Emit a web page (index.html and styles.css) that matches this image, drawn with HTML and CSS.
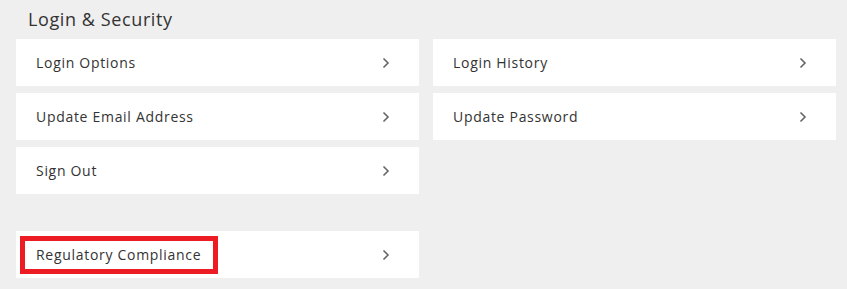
FILE: index.html
```html
<!DOCTYPE html>
<html lang="en">
<head>
    <meta charset="UTF-8">
    <meta name="viewport" content="width=device-width, initial-scale=1.0">
    <title>Login &amp; Security</title>
    <link rel="stylesheet" href="styles.css">
</head>
<body>
    <div class="settings">
        <h2 class="section-title">Login &amp; Security</h2>
        <div class="card-grid">
            <a class="card" href="#">
                <span class="card-label">Login Options</span>
                <svg class="chevron" viewBox="0 0 8 12"><path d="M1.5 1.5 L6 6 L1.5 10.5"/></svg>
            </a>
            <a class="card" href="#">
                <span class="card-label">Login History</span>
                <svg class="chevron" viewBox="0 0 8 12"><path d="M1.5 1.5 L6 6 L1.5 10.5"/></svg>
            </a>
            <a class="card" href="#">
                <span class="card-label">Update Email Address</span>
                <svg class="chevron" viewBox="0 0 8 12"><path d="M1.5 1.5 L6 6 L1.5 10.5"/></svg>
            </a>
            <a class="card" href="#">
                <span class="card-label">Update Password</span>
                <svg class="chevron" viewBox="0 0 8 12"><path d="M1.5 1.5 L6 6 L1.5 10.5"/></svg>
            </a>
            <a class="card" href="#">
                <span class="card-label">Sign Out</span>
                <svg class="chevron" viewBox="0 0 8 12"><path d="M1.5 1.5 L6 6 L1.5 10.5"/></svg>
            </a>
        </div>

        <div class="card-grid compliance">
            <a class="card highlighted" href="#">
                <span class="card-label">Regulatory Compliance</span>
                <svg class="chevron" viewBox="0 0 8 12"><path d="M1.5 1.5 L6 6 L1.5 10.5"/></svg>
                <span class="highlight-box"></span>
            </a>
        </div>
    </div>
</body>
</html>
```

FILE: styles.css
```css
body {
    margin: 0;
    padding: 0;
    background-color: #efefef;
    font-family: 'Open Sans', 'Liberation Sans', sans-serif;
    color: #333333;
}

.settings {
    padding: 7px 11px 0 16px;
}

.section-title {
    margin: 0 0 8px 12px;
    font-size: 18px;
    font-weight: 400;
    line-height: 24px;
    letter-spacing: 0.6px;
    color: #333333;
}

.card-grid {
    display: grid;
    grid-template-columns: 403px 403px;
    column-gap: 14px;
    row-gap: 7px;
}

.compliance {
    margin-top: 37px;
}

.card {
    position: relative;
    display: flex;
    align-items: center;
    justify-content: space-between;
    height: 47px;
    padding: 0 29px 0 20px;
    background-color: #ffffff;
    text-decoration: none;
    color: #333333;
}

.card-label {
    font-size: 14px;
    letter-spacing: 0.7px;
}

.chevron {
    width: 8px;
    height: 12px;
    fill: none;
    stroke: #666666;
    stroke-width: 1.6;
}

.highlight-box {
    position: absolute;
    top: 5px;
    left: 4px;
    width: 188px;
    height: 28px;
    border: 5px solid #ed1c24;
}
```
